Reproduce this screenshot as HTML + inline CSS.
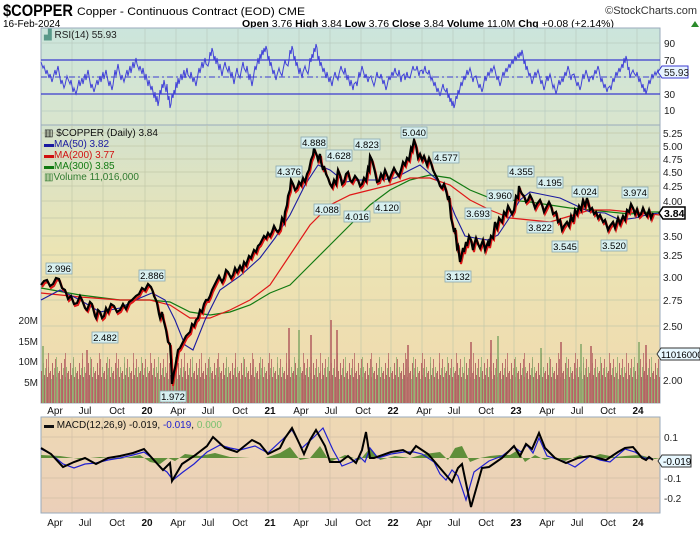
<!DOCTYPE html>
<html><head><meta charset="utf-8"><style>
body{margin:0;background:#fff;width:700px;height:530px;overflow:hidden;font-family:"Liberation Sans",sans-serif}
</style></head><body>
<svg width="700" height="530" xmlns="http://www.w3.org/2000/svg" font-family="Liberation Sans, sans-serif">
<defs>
<linearGradient id="gr" x1="0" y1="0" x2="0" y2="1"><stop offset="0" stop-color="#cbe5dc"/><stop offset="1" stop-color="#d9e5cd"/></linearGradient>
<linearGradient id="gp" x1="0" y1="0" x2="0" y2="1"><stop offset="0" stop-color="#d3e2cd"/><stop offset="0.45" stop-color="#ebe4b4"/><stop offset="1" stop-color="#f1d9ae"/></linearGradient>
<linearGradient id="gm" x1="0" y1="0" x2="0" y2="1"><stop offset="0" stop-color="#eed9b4"/><stop offset="1" stop-color="#ebcfb9"/></linearGradient>
<pattern id="vol" x="41" y="333" width="9" height="70" patternUnits="userSpaceOnUse">
<rect x="0" y="38" width="1" height="32" fill="#a85a5a"/><rect x="1" y="46" width="1" height="24" fill="#8fae70"/>
<rect x="2" y="30" width="1" height="40" fill="#b05e60"/><rect x="3" y="42" width="1" height="28" fill="#a85a5a"/>
<rect x="4" y="35" width="1" height="35" fill="#8fae70"/><rect x="5" y="26" width="1" height="44" fill="#b86a68"/>
<rect x="6" y="44" width="1" height="26" fill="#a85a5c"/><rect x="7" y="34" width="1" height="36" fill="#8fae70"/>
<rect x="8" y="40" width="1" height="30" fill="#b86a68"/>
</pattern>
<pattern id="vol2" x="45" y="333" width="17" height="70" patternUnits="userSpaceOnUse">
<rect x="3" y="20" width="1" height="50" fill="#b86a68"/><rect x="11" y="24" width="1" height="46" fill="#8fae70"/>
</pattern>
</defs>
<!-- header -->
<text x="3" y="16" font-size="17" font-weight="bold" fill="#000" textLength="70" lengthAdjust="spacingAndGlyphs">$COPPER</text>
<text x="77" y="15" font-size="11" fill="#000" textLength="228" lengthAdjust="spacingAndGlyphs">Copper - Continuous Contract (EOD) CME</text>
<text x="697" y="14" font-size="11" fill="#333" text-anchor="end">©StockCharts.com</text>
<text x="3" y="27" font-size="10" fill="#000">16-Feb-2024</text>
<text x="242" y="27" font-size="10.5" fill="#000"><tspan font-weight="bold">Open</tspan> 3.76 <tspan font-weight="bold">High</tspan> 3.84 <tspan font-weight="bold">Low</tspan> 3.76 <tspan font-weight="bold">Close</tspan> 3.84 <tspan font-weight="bold">Volume</tspan> 11.0M <tspan font-weight="bold">Chg</tspan> +0.08 (+2.14%)</text>
<polygon points="691,27 699,27 695,21" fill="#2a8a2a"/>

<!-- RSI panel -->
<rect x="41" y="28" width="619" height="97" fill="url(#gr)" stroke="#9ab" stroke-width="1"/>
<g stroke="#b9cbc0" stroke-width="0.7">
<line x1="41" y1="43" x2="660" y2="43"/><line x1="41" y1="77" x2="660" y2="77"/><line x1="41" y1="111" x2="660" y2="111"/>
<line x1="145" y1="28" x2="145" y2="125"/><line x1="268" y1="28" x2="268" y2="125"/><line x1="391" y1="28" x2="391" y2="125"/><line x1="514" y1="28" x2="514" y2="125"/><line x1="637" y1="28" x2="637" y2="125"/>
<line x1="72" y1="28" x2="72" y2="125"/><line x1="103" y1="28" x2="103" y2="125"/><line x1="176" y1="28" x2="176" y2="125"/><line x1="207" y1="28" x2="207" y2="125"/><line x1="238" y1="28" x2="238" y2="125"/><line x1="299" y1="28" x2="299" y2="125"/><line x1="330" y1="28" x2="330" y2="125"/><line x1="361" y1="28" x2="361" y2="125"/><line x1="422" y1="28" x2="422" y2="125"/><line x1="453" y1="28" x2="453" y2="125"/><line x1="484" y1="28" x2="484" y2="125"/><line x1="545" y1="28" x2="545" y2="125"/><line x1="576" y1="28" x2="576" y2="125"/><line x1="607" y1="28" x2="607" y2="125"/>
</g>
<line x1="41" y1="60" x2="660" y2="60" stroke="#3a3ad0" stroke-width="1.2"/>
<line x1="41" y1="94" x2="660" y2="94" stroke="#3a3ad0" stroke-width="1.2"/>
<line x1="41" y1="77" x2="660" y2="77" stroke="#3a3ad0" stroke-width="1" stroke-dasharray="6,3,2,3"/>
<polyline fill="none" stroke="#4040d8" stroke-width="1" points="41,62 43,68 44,66 46,74 47,70 49,78 50,74 52,82 53,78 55,70 56,75 58,66 59,72 61,84 62,80 64,88 65,85 67,76 68,79 70,84 71,80 73,92 74,88 76,94 77,90 79,80 80,86 82,78 83,84 85,74 86,80 88,70 89,76 91,88 92,84 94,92 95,88 97,80 98,85 100,76 101,82 103,72 104,79 106,70 107,76 109,86 110,81 112,90 113,85 115,70 116,76 118,64 119,70 121,80 122,75 124,82 125,78 127,70 128,76 130,66 131,73 133,62 134,68 136,58 137,64 139,70 140,66 142,74 143,68 145,80 146,74 148,86 149,80 151,90 152,86 154,98 155,92 156,102 157,96 158,106 159,100 160,90 161,94 162,84 163,88 164,80 165,86 166,92 167,84 168,100 169,96 170,108 171,104 172,94 173,98 174,90 175,94 176,82 177,88 178,78 179,84 181,74 182,80 184,70 185,78 187,68 188,75 190,78 191,72 193,82 194,77 196,86 197,80 199,68 200,73 202,62 203,68 205,58 206,64 208,66 209,62 210,52 211,56 212,48 213,52 214,60 215,56 216,64 217,58 219,70 220,64 222,76 223,70 225,62 226,67 228,72 229,66 231,78 232,72 234,84 235,78 237,68 238,74 240,78 241,72 243,62 244,68 246,72 247,66 249,80 250,74 252,86 253,80 255,66 256,70 258,58 259,64 260,54 261,59 262,50 263,55 264,48 265,52 266,46 267,50 268,60 269,56 270,66 271,62 273,74 274,70 276,80 277,75 279,68 280,72 282,76 283,70 285,60 286,64 288,66 289,60 290,50 291,54 292,46 293,50 294,60 295,56 296,66 297,62 299,74 300,68 302,78 303,72 305,66 306,70 308,74 309,68 310,58 311,62 312,54 313,58 314,48 315,52 316,44 317,48 318,60 319,56 320,66 321,62 323,72 324,68 326,78 327,72 329,82 330,77 332,86 333,80 335,72 336,76 338,80 339,74 341,66 342,70 344,74 345,68 347,80 348,75 350,86 351,80 353,90 354,84 356,82 357,86 359,72 360,77 362,66 363,70 365,78 366,74 368,82 369,78 371,76 372,80 374,86 375,82 377,72 378,77 380,78 381,74 383,84 384,80 386,90 387,86 389,76 390,80 392,72 393,76 395,68 396,73 398,76 399,70 401,82 402,76 404,74 405,80 407,72 408,77 410,78 411,74 413,66 414,70 416,70 417,66 419,76 420,71 422,70 423,74 425,66 426,72 428,74 429,70 431,80 432,77 434,86 435,82 437,92 438,88 440,96 441,92 443,84 444,89 446,92 447,88 448,98 449,94 450,102 451,98 452,106 453,101 454,108 455,104 456,96 457,99 458,90 459,94 461,82 462,86 464,76 465,80 467,70 468,75 470,68 471,72 473,82 474,77 476,76 477,80 479,88 480,84 482,92 483,88 485,76 486,81 488,72 489,76 491,68 492,72 494,66 495,70 497,80 498,76 500,86 501,82 503,72 504,76 506,68 507,72 509,64 510,68 512,60 513,64 515,56 516,60 518,54 519,58 520,52 521,56 522,50 523,55 524,64 525,60 526,70 527,66 529,76 530,73 532,84 533,80 535,72 536,76 538,70 539,74 541,84 542,80 544,90 545,86 547,76 548,81 550,74 551,78 553,88 554,85 556,94 557,90 559,80 560,85 562,78 563,82 565,72 566,76 568,66 569,70 571,80 572,75 574,74 575,78 577,86 578,82 580,90 581,86 583,74 584,79 586,70 587,74 589,82 590,78 592,76 593,80 595,70 596,74 598,66 599,70 601,82 602,78 604,88 605,84 607,92 608,88 610,86 611,90 613,78 614,82 616,72 617,76 619,68 620,72 622,64 623,68 624,58 625,63 626,56 627,60 628,70 629,67 630,78 631,74 633,70 634,73 636,76 637,72 639,82 640,78 642,88 643,84 644,92 645,88 646,94 647,90 649,80 650,84 652,74 653,78 655,72 656,75 658,70 659,74"/>
<text x="44" y="38" font-size="10" fill="#222"><tspan fill="#5a9a8a">▟</tspan> RSI(14) 55.93</text>
<g font-size="10" fill="#222"><text x="664" y="47">90</text><text x="664" y="64">70</text><text x="664" y="98">30</text><text x="664" y="114">10</text></g>
<polygon points="658,72 662,66 688,66 688,78 662,78" fill="#e8f4ff" stroke="#3a3ad0"/>
<text x="664" y="76" font-size="10" fill="#222">55.93</text>

<!-- Price panel -->
<rect x="41" y="125" width="619" height="278" fill="url(#gp)" stroke="#9ab" stroke-width="1"/>
<g stroke="#c2c8a8" stroke-width="0.7">
<line x1="41" y1="133" x2="660" y2="133"/><line x1="41" y1="146" x2="660" y2="146"/><line x1="41" y1="159" x2="660" y2="159"/><line x1="41" y1="172" x2="660" y2="172"/><line x1="41" y1="186" x2="660" y2="186"/><line x1="41" y1="201" x2="660" y2="201"/><line x1="41" y1="218" x2="660" y2="218"/><line x1="41" y1="236" x2="660" y2="236"/><line x1="41" y1="255" x2="660" y2="255"/><line x1="41" y1="277" x2="660" y2="277"/><line x1="41" y1="300" x2="660" y2="300"/><line x1="41" y1="326" x2="660" y2="326"/><line x1="41" y1="354" x2="660" y2="354"/><line x1="41" y1="380" x2="660" y2="380"/>
<line x1="145" y1="125" x2="145" y2="403"/><line x1="268" y1="125" x2="268" y2="403"/><line x1="391" y1="125" x2="391" y2="403"/><line x1="514" y1="125" x2="514" y2="403"/><line x1="637" y1="125" x2="637" y2="403"/>
<line x1="72" y1="125" x2="72" y2="403"/><line x1="103" y1="125" x2="103" y2="403"/><line x1="176" y1="125" x2="176" y2="403"/><line x1="207" y1="125" x2="207" y2="403"/><line x1="238" y1="125" x2="238" y2="403"/><line x1="299" y1="125" x2="299" y2="403"/><line x1="330" y1="125" x2="330" y2="403"/><line x1="361" y1="125" x2="361" y2="403"/><line x1="422" y1="125" x2="422" y2="403"/><line x1="453" y1="125" x2="453" y2="403"/><line x1="484" y1="125" x2="484" y2="403"/><line x1="545" y1="125" x2="545" y2="403"/><line x1="576" y1="125" x2="576" y2="403"/><line x1="607" y1="125" x2="607" y2="403"/>
</g>
<rect x="41" y="333" width="619" height="70" fill="url(#vol)" opacity="0.9"/>
<rect x="41" y="333" width="619" height="70" fill="url(#vol2)" opacity="0.8"/>
<g fill="#b86a68" opacity="0.85"><rect x="330" y="320" width="2" height="83"/><rect x="336" y="330" width="2" height="73"/><rect x="310" y="335" width="2" height="68"/><rect x="288" y="328" width="2" height="75"/><rect x="407" y="345" width="2" height="58"/><rect x="490" y="340" width="2" height="63"/><rect x="560" y="342" width="2" height="61"/><rect x="590" y="346" width="2" height="57"/><rect x="645" y="345" width="2" height="58"/><rect x="86" y="350" width="2" height="53"/><rect x="470" y="342" width="2" height="61"/></g>
<g fill="#8fae70" opacity="0.85"><rect x="298" y="330" width="2" height="73"/><rect x="497" y="336" width="2" height="67"/><rect x="540" y="348" width="2" height="55"/><rect x="638" y="342" width="2" height="61"/><rect x="42" y="346" width="2" height="57"/><rect x="580" y="344" width="2" height="59"/></g>

<polyline fill="none" stroke="#127a12" stroke-width="1.2" points="41,288 80,295 120,300 150,300 170,302 190,312 210,315 230,312 250,305 270,293 290,285 310,265 330,245 350,225 370,205 390,190 410,180 430,175 450,178 470,190 490,198 510,200 530,202 550,205 570,208 590,210 610,212 630,214 650,212 660,212"/>
<polyline fill="none" stroke="#e01818" stroke-width="1.2" points="41,293 80,297 120,300 150,300 170,305 190,318 210,318 230,310 250,300 270,285 290,255 310,225 330,205 350,195 370,190 390,185 410,178 430,178 450,185 470,200 490,210 510,218 530,220 550,222 570,216 590,210 610,210 630,212 650,214 660,215"/>
<polyline fill="none" stroke="#1a1aa0" stroke-width="1.1" points="41,300 60,290 80,300 100,312 120,308 140,298 152,293 165,300 175,320 185,345 193,350 205,320 220,290 240,276 260,258 275,238 290,215 305,185 318,165 330,170 345,182 360,180 380,180 395,178 410,170 420,165 435,178 445,190 455,215 465,236 475,238 488,240 498,235 508,220 520,200 530,192 545,195 560,198 575,205 590,212 605,213 620,220 635,218 650,214 660,213"/>
<g id="px">
<polyline fill="none" stroke="#e01818" stroke-width="2" transform="translate(1,2)" points="41,285 44,281 47,280 50,286 53,284 56,278 59,279 62,288 65,290 68,299 71,296 74,304 77,303 80,296 82,300 85,308 87,310 90,302 92,304 95,316 96,318 98,310 100,312 102,318 104,316 106,308 108,312 111,304 114,306 117,312 120,310 123,304 126,309 129,302 132,300 136,296 139,294 142,288 145,290 148,284 151,287 153,292 154,296 156,300 157,303 159,314 160,318 162,312 163,318 165,326 166,330 168,342 170,344 171,360 172,384 174,372 175,368 177,356 178,350 180,348 182,344 184,340 186,336 188,334 190,332 192,324 194,326 196,320 198,318 200,310 202,312 204,304 206,300 208,300 210,296 212,290 214,286 217,280 219,276 222,282 224,278 226,270 228,272 231,278 233,275 235,268 237,272 240,266 242,270 244,262 246,265 249,256 251,258 254,250 256,252 258,246 260,244 262,240 264,236 266,238 268,233 270,236 272,232 274,226 276,230 278,232 280,229 282,218 284,222 285,212 287,205 288,196 290,190 291,180 293,184 295,190 297,188 299,182 301,185 303,178 305,182 307,174 309,170 311,160 313,155 314,148 315,151 317,156 318,160 320,154 321,162 323,170 324,166 326,174 328,178 330,184 332,187 334,180 336,184 338,170 340,175 342,184 344,182 346,174 348,172 350,180 352,182 355,176 358,180 360,186 362,184 364,178 366,181 368,168 369,170 370,156 372,160 374,168 375,172 377,182 379,181 381,174 383,178 385,170 387,175 389,180 391,175 394,168 396,172 399,176 401,170 403,162 405,165 407,158 409,160 411,148 412,150 414,140 416,146 417,152 418,158 420,154 422,160 424,156 427,165 429,158 431,163 433,170 434,172 436,176 438,180 440,186 442,188 444,184 446,190 448,200 449,196 451,218 452,222 454,232 455,228 457,248 458,246 460,262 461,258 463,248 464,252 466,242 467,246 469,236 471,240 473,250 474,245 476,238 478,244 480,248 483,240 485,250 486,247 488,242 489,246 491,236 493,238 495,222 497,228 499,218 502,222 504,212 506,215 508,206 510,210 512,214 514,210 516,196 518,198 519,186 520,190 522,194 524,196 526,202 528,200 530,195 532,199 535,208 537,204 540,200 542,205 544,212 546,208 549,202 551,206 553,214 556,212 558,222 560,220 562,230 564,226 567,222 569,226 571,216 573,222 575,210 577,214 579,206 581,210 583,200 585,206 587,198 588,202 590,210 592,208 594,214 596,212 598,218 600,215 603,222 605,220 608,230 610,226 613,222 615,228 618,218 620,224 623,216 625,220 627,210 629,212 631,204 633,208 635,214 637,209 639,216 641,214 643,208 645,213 647,216 649,210 651,218 653,213"/>
<polyline fill="none" stroke="#000" stroke-width="2.2" points="41,285 44,281 47,280 50,286 53,284 56,278 59,279 62,288 65,290 68,299 71,296 74,304 77,303 80,296 82,300 85,308 87,310 90,302 92,304 95,316 96,318 98,310 100,312 102,318 104,316 106,308 108,312 111,304 114,306 117,312 120,310 123,304 126,309 129,302 132,300 136,296 139,294 142,288 145,290 148,284 151,287 153,292 154,296 156,300 157,303 159,314 160,318 162,312 163,318 165,326 166,330 168,342 170,344 171,360 172,384 174,372 175,368 177,356 178,350 180,348 182,344 184,340 186,336 188,334 190,332 192,324 194,326 196,320 198,318 200,310 202,312 204,304 206,300 208,300 210,296 212,290 214,286 217,280 219,276 222,282 224,278 226,270 228,272 231,278 233,275 235,268 237,272 240,266 242,270 244,262 246,265 249,256 251,258 254,250 256,252 258,246 260,244 262,240 264,236 266,238 268,233 270,236 272,232 274,226 276,230 278,232 280,229 282,218 284,222 285,212 287,205 288,196 290,190 291,180 293,184 295,190 297,188 299,182 301,185 303,178 305,182 307,174 309,170 311,160 313,155 314,148 315,151 317,156 318,160 320,154 321,162 323,170 324,166 326,174 328,178 330,184 332,187 334,180 336,184 338,170 340,175 342,184 344,182 346,174 348,172 350,180 352,182 355,176 358,180 360,186 362,184 364,178 366,181 368,168 369,170 370,156 372,160 374,168 375,172 377,182 379,181 381,174 383,178 385,170 387,175 389,180 391,175 394,168 396,172 399,176 401,170 403,162 405,165 407,158 409,160 411,148 412,150 414,140 416,146 417,152 418,158 420,154 422,160 424,156 427,165 429,158 431,163 433,170 434,172 436,176 438,180 440,186 442,188 444,184 446,190 448,200 449,196 451,218 452,222 454,232 455,228 457,248 458,246 460,262 461,258 463,248 464,252 466,242 467,246 469,236 471,240 473,250 474,245 476,238 478,244 480,248 483,240 485,250 486,247 488,242 489,246 491,236 493,238 495,222 497,228 499,218 502,222 504,212 506,215 508,206 510,210 512,214 514,210 516,196 518,198 519,186 520,190 522,194 524,196 526,202 528,200 530,195 532,199 535,208 537,204 540,200 542,205 544,212 546,208 549,202 551,206 553,214 556,212 558,222 560,220 562,230 564,226 567,222 569,226 571,216 573,222 575,210 577,214 579,206 581,210 583,200 585,206 587,198 588,202 590,210 592,208 594,214 596,212 598,218 600,215 603,222 605,220 608,230 610,226 613,222 615,228 618,218 620,224 623,216 625,220 627,210 629,212 631,204 633,208 635,214 637,209 639,216 641,214 643,208 645,213 647,216 649,210 651,218 653,213"/>
</g>

<g font-size="9.5" fill="#000" text-anchor="middle">
<g fill="#d8f0f0" stroke="#8aa8b0" stroke-width="0.8">
<rect x="46" y="263" width="26" height="11"/><rect x="139" y="270" width="26" height="11"/><rect x="92" y="332" width="26" height="11"/><rect x="276" y="166" width="26" height="11"/><rect x="301" y="137" width="26" height="11"/><rect x="326" y="150" width="26" height="11"/><rect x="314" y="204" width="26" height="11"/><rect x="160" y="391" width="26" height="11"/><rect x="344" y="211" width="26" height="11"/><rect x="354" y="139" width="26" height="11"/><rect x="401" y="127" width="26" height="11"/><rect x="433" y="152" width="26" height="11"/><rect x="374" y="202" width="26" height="11"/><rect x="487" y="190" width="26" height="11"/><rect x="465" y="208" width="26" height="11"/><rect x="445" y="271" width="26" height="11"/><rect x="508" y="166" width="26" height="11"/><rect x="537" y="177" width="26" height="11"/><rect x="527" y="222" width="26" height="11"/><rect x="572" y="186" width="26" height="11"/><rect x="552" y="241" width="26" height="11"/><rect x="601" y="240" width="26" height="11"/><rect x="622" y="187" width="26" height="11"/>
</g>
<text x="59" y="272">2.996</text><text x="152" y="279">2.886</text><text x="105" y="341">2.482</text><text x="289" y="175">4.376</text><text x="314" y="146">4.888</text><text x="339" y="159">4.628</text><text x="327" y="213">4.088</text><text x="173" y="400">1.972</text><text x="357" y="220">4.016</text><text x="367" y="148">4.823</text><text x="414" y="136">5.040</text><text x="446" y="161">4.577</text><text x="387" y="211">4.120</text><text x="500" y="199">3.960</text><text x="478" y="217">3.693</text><text x="458" y="280">3.132</text><text x="521" y="175">4.355</text><text x="550" y="186">4.195</text><text x="540" y="231">3.822</text><text x="585" y="195">4.024</text><text x="565" y="250">3.545</text><text x="614" y="249">3.520</text><text x="635" y="196">3.974</text>
</g>

<g font-size="10" fill="#111">
<text x="44" y="136">▥ $COPPER (Daily) 3.84</text>
<text x="44" y="147" fill="#1a1aa0">▬MA(50) 3.82</text>
<text x="44" y="158" fill="#d01010">▬MA(200) 3.77</text>
<text x="44" y="169" fill="#127a12">▬MA(300) 3.85</text>
<text x="44" y="180" fill="#2f7a2f">▥Volume 11,016,000</text>
</g>
<g font-size="10" fill="#222">
<text x="663" y="137">5.25</text><text x="663" y="150">5.00</text><text x="663" y="163">4.75</text><text x="663" y="176">4.50</text><text x="663" y="190">4.25</text><text x="663" y="205">4.00</text><text x="663" y="240">3.50</text><text x="663" y="259">3.25</text><text x="663" y="281">3.00</text><text x="663" y="304">2.75</text><text x="663" y="330">2.50</text><text x="663" y="358">2.25</text><text x="663" y="384">2.00</text>
<text x="38" y="324" text-anchor="end">20M</text><text x="38" y="345" text-anchor="end">15M</text><text x="38" y="365" text-anchor="end">10M</text><text x="38" y="386" text-anchor="end">5M</text>
</g>
<polygon points="659,213 663,207 685,207 685,219 663,219" fill="#fff" stroke="#000" stroke-width="1.5"/>
<text x="664" y="217" font-size="10.5" font-weight="bold">3.84</text>
<polygon points="657,354 661,348 700,348 700,360 661,360" fill="#e8f8ff" stroke="#333"/>
<text x="661" y="358" font-size="9.5">11016000</text>

<!-- x labels -->
<g font-size="10" fill="#111" text-anchor="middle">
<text x="55" y="414">Apr</text><text x="85" y="414">Jul</text><text x="117" y="414">Oct</text><text x="147" y="414" font-weight="bold">20</text><text x="178" y="414">Apr</text><text x="208" y="414">Jul</text><text x="240" y="414">Oct</text><text x="270" y="414" font-weight="bold">21</text><text x="301" y="414">Apr</text><text x="331" y="414">Jul</text><text x="363" y="414">Oct</text><text x="393" y="414" font-weight="bold">22</text><text x="424" y="414">Apr</text><text x="454" y="414">Jul</text><text x="486" y="414">Oct</text><text x="516" y="414" font-weight="bold">23</text><text x="547" y="414">Apr</text><text x="577" y="414">Jul</text><text x="608" y="414">Oct</text><text x="638" y="414" font-weight="bold">24</text>
</g>

<!-- MACD -->
<rect x="41" y="417" width="619" height="96" fill="url(#gm)" stroke="#9ab" stroke-width="1"/>
<g stroke="#d2bfa6" stroke-width="0.7">
<line x1="41" y1="437" x2="660" y2="437"/><line x1="41" y1="478" x2="660" y2="478"/><line x1="41" y1="498" x2="660" y2="498"/>
<line x1="145" y1="417" x2="145" y2="513"/><line x1="268" y1="417" x2="268" y2="513"/><line x1="391" y1="417" x2="391" y2="513"/><line x1="514" y1="417" x2="514" y2="513"/><line x1="637" y1="417" x2="637" y2="513"/>
<line x1="72" y1="417" x2="72" y2="513"/><line x1="103" y1="417" x2="103" y2="513"/><line x1="176" y1="417" x2="176" y2="513"/><line x1="207" y1="417" x2="207" y2="513"/><line x1="238" y1="417" x2="238" y2="513"/><line x1="299" y1="417" x2="299" y2="513"/><line x1="330" y1="417" x2="330" y2="513"/><line x1="361" y1="417" x2="361" y2="513"/><line x1="422" y1="417" x2="422" y2="513"/><line x1="453" y1="417" x2="453" y2="513"/><line x1="484" y1="417" x2="484" y2="513"/><line x1="545" y1="417" x2="545" y2="513"/><line x1="576" y1="417" x2="576" y2="513"/><line x1="607" y1="417" x2="607" y2="513"/>
</g>
<polygon fill="#5f8f3a" points="41,458 41,455 60,456 80,459 100,457 120,459 140,455 150,462 160,464 168,458 175,461 185,454 200,456 215,453 230,457 250,458 265,458 280,453 290,447 300,460 310,458 320,446 330,462 345,455 360,460 370,448 380,460 395,456 410,458 425,454 440,452 448,460 455,448 462,446 470,462 480,458 490,456 500,455 510,455 518,450 525,462 535,455 545,460 555,457 565,461 580,455 590,458 600,454 615,457 625,456 640,455 655,459 660,458"/>
<polyline fill="none" stroke="#2020d0" stroke-width="1.2" points="41,449 51,454 63,464 74,468 85,464 96,463 108,460 120,458 133,455 144,452 152,458 161,468 167,472 173,480 183,472 194,464 207,452 220,445 230,448 240,450 255,446 268,453 282,440 292,430 302,448 313,438 323,428 333,450 342,466 352,462 360,457 365,462 370,448 378,458 391,454 404,452 414,452 422,454 434,462 440,474 446,480 452,470 458,476 466,500 474,472 489,461 502,456 514,447 521,452 527,445 533,453 539,438 547,456 563,461 575,467 590,456 600,460 610,462 625,449 635,452 644,458 653,459"/>
<polyline fill="none" stroke="#000" stroke-width="2" points="41,448 51,454 63,467 74,462 85,458 96,464 108,458 120,456 133,453 144,449 152,458 163,470 170,463 172,481 182,464 194,456 207,446 213,437 225,448 237,452 252,440 260,444 268,454 280,448 285,438 292,428 300,445 304,454 310,440 316,430 325,446 330,462 340,462 348,456 356,463 362,450 366,432 370,458 374,458 391,452 403,450 410,454 416,446 428,454 446,475 452,482 458,468 462,464 471,507 482,468 489,467 502,458 508,452 514,446 520,456 526,444 532,449 539,433 545,448 555,458 566,463 578,458 590,456 606,460 618,452 625,448 633,447 642,458 646,460 649,457 653,460"/>
<text x="44" y="428" font-size="10" fill="#111">▬ MACD(12,26,9) -0.019, <tspan fill="#2020d0">-0.019</tspan>, <tspan fill="#7ac070">0.000</tspan></text>
<g font-size="10" fill="#222"><text x="664" y="441">0.1</text><text x="664" y="482">-0.1</text><text x="664" y="502">-0.2</text></g>
<polygon points="658,461 662,455 691,455 691,467 662,467" fill="#e8f8ff" stroke="#333"/>
<text x="663" y="465" font-size="10">-0.019</text>
<g font-size="10" fill="#111" text-anchor="middle">
<text x="55" y="526">Apr</text><text x="85" y="526">Jul</text><text x="117" y="526">Oct</text><text x="147" y="526" font-weight="bold">20</text><text x="178" y="526">Apr</text><text x="208" y="526">Jul</text><text x="240" y="526">Oct</text><text x="270" y="526" font-weight="bold">21</text><text x="301" y="526">Apr</text><text x="331" y="526">Jul</text><text x="363" y="526">Oct</text><text x="393" y="526" font-weight="bold">22</text><text x="424" y="526">Apr</text><text x="454" y="526">Jul</text><text x="486" y="526">Oct</text><text x="516" y="526" font-weight="bold">23</text><text x="547" y="526">Apr</text><text x="577" y="526">Jul</text><text x="608" y="526">Oct</text><text x="638" y="526" font-weight="bold">24</text>
</g>
</svg>
</body></html>
